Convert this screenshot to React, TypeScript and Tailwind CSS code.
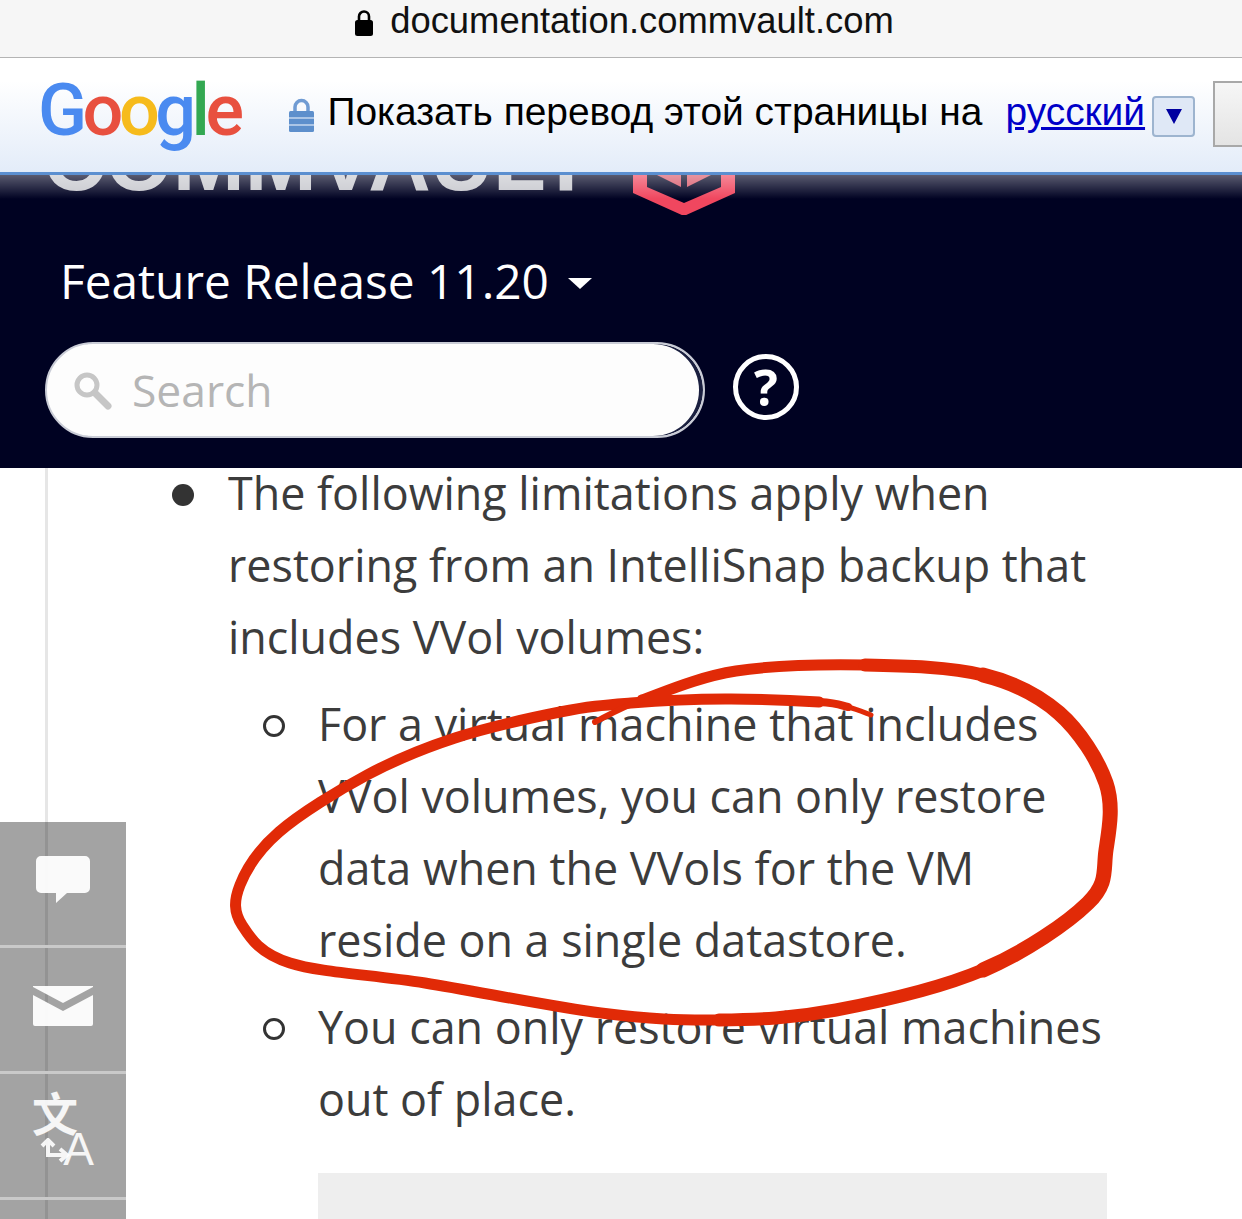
const sideItems = ["chat", "mail", "translate"];

// traced by hand from the screenshot, start of the stroke first
const ringPoints: [number, number][] = [
  [871, 715], [848, 707], [819, 702], [725, 699], [631, 703], [560, 712], [455, 738], [367, 775], [279, 832],
  [240, 885], [242, 925], [290, 963], [425, 983], [601, 1013], [719, 1020], [836, 1010], [983, 970],
  [1088, 903], [1106, 850], [1106, 783], [1059, 713], [983, 675], [865, 665], [736, 671], [642, 700], [595, 722],
];

// catmull-rom through the points so the pen line stays smooth
function smoothPath(from: number, to: number) {
  const pts = ringPoints;
  let d = `M${pts[from][0]} ${pts[from][1]}`;
  for (let i = from; i < to; i++) {
    const p0 = pts[i - 1] ?? pts[i];
    const p1 = pts[i];
    const p2 = pts[i + 1];
    const p3 = pts[i + 2] ?? p2;
    const c1x = p1[0] + (p2[0] - p0[0]) / 6;
    const c1y = p1[1] + (p2[1] - p0[1]) / 6;
    const c2x = p2[0] - (p3[0] - p1[0]) / 6;
    const c2y = p2[1] - (p3[1] - p1[1]) / 6;
    d += `C${c1x} ${c1y} ${c2x} ${c2y} ${p2[0]} ${p2[1]}`;
  }
  return d;
}

function GoogleLogo() {
  return (
    <span className="w-[205px] -ml-[3px] -mt-[5px] font-['Roboto',sans-serif] text-[72px] leading-none tracking-[-4.5px] font-medium whitespace-nowrap">
      <span className="text-[#4a8af0]">G</span>
      <span className="text-[#e8503f]">o</span>
      <span className="text-[#f6bb1c]">o</span>
      <span className="text-[#4a8af0]">g</span>
      <span className="text-[#33a852]">l</span>
      <span className="text-[#e8503f]">e</span>
    </span>
  );
}

function SideIcon({ name }: { name: string }) {
  if (name === "chat") {
    return (
      <svg width="54" height="48" viewBox="0 0 54 48" fill="white" className="-mt-[8px] opacity-95">
        <path d="M5 0h44a5 5 0 0 1 5 5v27a5 5 0 0 1-5 5H31L20 47V37H5a5 5 0 0 1-5-5V5a5 5 0 0 1 5-5z" />
      </svg>
    );
  }
  if (name === "mail") {
    return (
      <svg width="60" height="40" viewBox="0 0 60 40" fill="white" className="-mt-[8px] opacity-95">
        <path d="M0 0h60v1L30 17 0 1z" />
        <path d="M0 9l30 16L60 9v29a2 2 0 0 1-2 2H2a2 2 0 0 1-2-2z" />
      </svg>
    );
  }
  return (
    <div className="relative w-[62px] h-[74px] -mt-[6px] text-white/90 font-['Liberation_Sans',sans-serif]">
      <span className="absolute left-0 top-[-8px] text-[46px] leading-none font-bold font-['Noto_Sans_CJK_SC',sans-serif]">文</span>
      <span className="absolute right-0 bottom-[-2px] text-[46px] leading-none">A</span>
      <svg width="30" height="30" viewBox="0 0 30 30" className="absolute left-[8px] bottom-[2px]" fill="none" stroke="white" strokeOpacity="0.9" strokeWidth="4">
        <path d="M8 1v16h18M20 11l7 6-7 6M2 8l6-6 6 6" />
      </svg>
    </div>
  );
}

export default function App() {
  return (
    <div className="relative w-[1242px] h-[1219px] overflow-hidden bg-white font-['Open_Sans',sans-serif]">
      {/* safari address bar */}
      <div className="h-[58px] bg-[#f6f6f6] border-b border-[#b4b4b4] flex items-center justify-center gap-[17px] pb-[18px] pt-[3px] pl-[7px]">
        <svg width="18" height="27" viewBox="0 0 18 27" className="mt-[2px]">
          <path d="M4 12V7.5a5 5 0 0 1 10 0V12" fill="none" stroke="#000" strokeWidth="2.6" />
          <rect x="0" y="11" width="18" height="16" rx="2.5" fill="#000" />
        </svg>
        <span className="font-['Liberation_Sans',sans-serif] text-[36.4px] leading-none text-[#111]">documentation.commvault.com</span>
      </div>

      {/* translate bar */}
      <div className="relative z-10 h-[117px] bg-gradient-to-b from-white from-20% to-[#e3ecf9] border-b-[3px] border-[#5b8fd0] flex items-center pl-[41px] pb-[4px] font-['Liberation_Sans',sans-serif] text-[38.9px] text-black">
        <GoogleLogo />
        <svg width="27" height="35" viewBox="0 0 27 35" className="ml-[48px] mt-[4px] shrink-0">
          <path d="M7 14V9a6.5 6.5 0 0 1 13 0v5" fill="none" stroke="#6f9bd3" strokeWidth="3.5" />
          <rect x="1" y="13" width="25" height="21" rx="1.5" fill="#5d8fcc" />
          <path d="M1 20h25M1 27h25" stroke="#c5d7ee" strokeWidth="1.5" />
        </svg>
        <span className="ml-[13px] -mt-[1px] leading-none whitespace-nowrap">Показать перевод этой страницы на</span>
        <a className="ml-[23px] -mt-[1px] leading-none text-[#0000c8] underline">русский</a>
        <span className="ml-[7px] shrink-0 w-[43px] h-[41px] rounded-[4px] bg-[#dfe8f6] border-[2px] border-[#9db4cf] flex items-center justify-center mt-[6px]">
          <span className="w-0 h-0 border-x-[8px] border-x-transparent border-t-[15px] border-t-[#0000a0]" />
        </span>
        <span className="ml-[18px] shrink-0 w-[40px] h-[66px] bg-gradient-to-b from-[#f6f6f6] to-[#e4e4e4] border-[2px] border-r-0 border-[#a8a8a8] mt-[2px]" />
      </div>

      {/* site header */}
      <div className="relative h-[293px] bg-[#000222] overflow-hidden">
        <div className="absolute inset-x-0 top-0 h-[24px] bg-gradient-to-b from-white/35 to-transparent z-10" />
        <div className="h-[15px] pl-[43px] flex items-end">
          <span className="font-['Liberation_Sans',sans-serif] font-bold text-[86.5px] leading-[60px] text-[#c8c9cf] whitespace-nowrap">COMMVAULT</span>
          <svg width="102" height="40" viewBox="0 0 102 40" className="absolute left-[633px] top-0 z-0">
            <path d="M0 0v18l51 23 51-23V0H88v12L51 28 14 12V0z" fill="#f0475f" />
            <path d="M24 0l24 12V0zM54 0v12L78 0z" fill="#d95a6c" />
          </svg>
        </div>
        <div className="mt-[60px] pl-[60px] flex items-center gap-[19px] text-white">
          <span className="text-[47.8px] leading-[62px]">Feature Release 11.20</span>
          <span className="w-0 h-0 mt-[5px] border-x-[12px] border-x-transparent border-t-[11px] border-t-white" />
        </div>
        <div className="mt-[30px] pl-[45px] flex items-center gap-[28px]">
          <div className="w-[660px] h-[96px] rounded-[48px] bg-[#fdfdfd] border-[2px] border-[#c9ccd6] shadow-[inset_-4px_0_0_#1b2040] flex items-center pl-[25px] gap-[20px]">
            <svg width="40" height="40" viewBox="0 0 40 40">
              <circle cx="15" cy="15" r="10" fill="none" stroke="#c6c6c6" strokeWidth="5" />
              <path d="M23 23l13 13" stroke="#c6c6c6" strokeWidth="7" strokeLinecap="round" />
            </svg>
            <span className="text-[44.4px] leading-none text-[#b5b5b5]">Search</span>
          </div>
          <span className="-mt-[6px] w-[66px] h-[66px] rounded-full border-[5px] border-white flex items-center justify-center text-white text-[50px] font-bold leading-none">?</span>
        </div>
      </div>

      {/* page content */}
      <div className="relative text-[44.85px] leading-[72px] text-[#3c3c3c]">
        <div className="absolute left-[45px] top-[11px] h-[760px] w-[3px] bg-[#e6e6e6]" />
        <ul className="relative pl-[228px] pr-[130px] -mt-[11px]">
          <li className="relative">
            <span className="absolute -left-[56px] top-[27px] w-[22px] h-[22px] rounded-full bg-[#333]" />
            The following limitations apply when restoring from an IntelliSnap backup that includes VVol volumes:
          </li>
        </ul>
        <ul className="relative pl-[318px] pr-[130px] mt-[15px]">
          <li className="relative">
            <span className="absolute -left-[55px] top-[27px] w-[22px] h-[22px] rounded-full border-[3px] border-[#333]" />
            For a virtual machine that includes VVol volumes, you can only restore data when the VVols for the VM reside on a single datastore.
          </li>
          <li className="relative mt-[15px]">
            <span className="absolute -left-[55px] top-[27px] w-[22px] h-[22px] rounded-full border-[3px] border-[#333]" />
            You can only restore virtual machines out of place.
          </li>
        </ul>
        <div className="ml-[318px] mr-[135px] mt-[38px] h-[60px] bg-[#eeeeee]" />
      </div>

      {/* feedback rail */}
      <div className="absolute left-0 top-[822px] w-[126px] flex flex-col bg-black/[0.36]">
        {sideItems.map((name) => (
          <div key={name} className="h-[126px] border-b-[3px] border-[#c9c9c9] flex items-center justify-center">
            <SideIcon name={name} />
          </div>
        ))}
        <div className="h-[30px]" />
      </div>

      {/* red hand drawn ring, the pen gets heavier round the right side */}
      <svg className="absolute left-0 top-0 pointer-events-none" width="1242" height="1219" viewBox="0 0 1242 1219" fill="none" strokeLinecap="round" strokeLinejoin="round" stroke="#e12a07">
        <path d={smoothPath(0, 1)} strokeWidth="5" />
        <path d={smoothPath(1, 2)} strokeWidth="8" />
        <path d={smoothPath(2, 24)} strokeWidth="11" />
        <path d={smoothPath(14, 22)} strokeWidth="13" />
        <path d={smoothPath(16, 21)} strokeWidth="15" />
        <path d={smoothPath(24, 25)} strokeWidth="6" />
      </svg>
    </div>
  );
}
